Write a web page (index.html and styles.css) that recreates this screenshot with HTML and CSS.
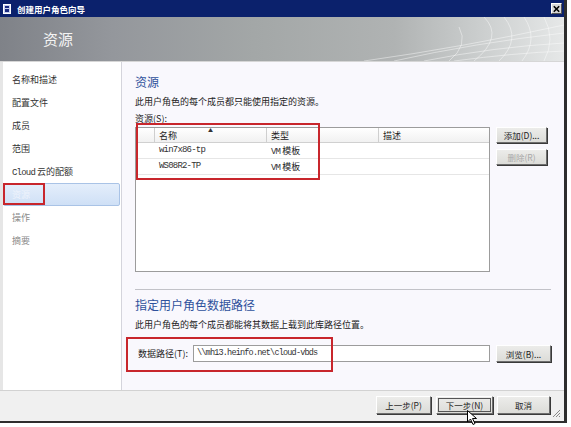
FILE: index.html
```html
<!DOCTYPE html>
<html lang="zh">
<head>
<meta charset="utf-8">
<link rel="stylesheet" href="styles.css">
</head>
<body>
<div class="window">
  <div class="titlebar">
    <svg class="ticon" width="8" height="10" viewBox="0 0 8 10"><rect x="0.5" y="0.5" width="7" height="9" fill="#c8d0f0" stroke="#fff"/><rect x="2" y="2" width="4" height="2" fill="#1a2a80"/><rect x="2" y="5" width="4" height="3" fill="#1a2a80"/></svg>
    <span class="ttext">创建用户角色向导</span>
    <span class="close"><svg width="10" height="10" viewBox="0 0 10 10"><path d="M2 2 L8 8 M8 2 L2 8" stroke="#000" stroke-width="1.8"/></svg></span>
  </div>
  <div class="banner">
    <span class="btitle">资源</span>
    <svg class="grid" width="200" height="44" viewBox="0 0 200 44">
      <g fill="none" stroke="#ffffff" stroke-opacity="0.55" stroke-width="0.8">
        <path d="M0 44 Q100 30 200 8"/>
        <path d="M30 44 Q110 26 200 16"/>
        <path d="M60 44 Q130 30 200 26"/>
        <path d="M90 44 Q150 36 200 34"/>
        <path d="M120 0 Q140 20 110 44"/>
        <path d="M140 0 Q158 22 135 44"/>
        <path d="M160 0 Q175 22 158 44"/>
        <path d="M180 0 Q192 22 180 44"/>
        <path d="M95 10 Q105 28 85 44"/>
      </g>
    </svg>
  </div>
  <div class="main">
    <nav class="nav">
      <div class="item">名称和描述</div>
      <div class="item">配置文件</div>
      <div class="item">成员</div>
      <div class="item">范围</div>
      <div class="item"><span class="mono">Cloud</span>&nbsp;云的配额</div>
      <div class="item selected">资源</div>
      <div class="item dim">操作</div>
      <div class="item dim">摘要</div>
    </nav>
    <section class="content">
      <h1 class="heading">资源</h1>
      <p class="desc">此用户角色的每个成员都只能使用指定的资源。</p>
      <p class="label">资源(S):</p>
      <div class="tablerow">
        <div class="table">
          <div class="thead">
            <div class="c0"></div>
            <div class="c1">名称<span class="sort">▲</span></div>
            <div class="c2">类型</div>
            <div class="c3">描述</div>
          </div>
          <div class="tr">
            <div class="c0"></div>
            <div class="c1 mono">win7x86-tp</div>
            <div class="c2"><span class="mono">VM</span>&nbsp;模板</div>
            <div class="c3"></div>
          </div>
          <div class="tr">
            <div class="c0"></div>
            <div class="c1 mono">WS08R2-TP</div>
            <div class="c2"><span class="mono">VM</span>&nbsp;模板</div>
            <div class="c3"></div>
          </div>
        </div>
        <div class="sidebtns">
          <button class="btn side">添加(D)...</button>
          <button class="btn side disabled">删除(R)</button>
        </div>
      </div>
      <hr class="sep">
      <h1 class="heading">指定用户角色数据路径</h1>
      <p class="desc">此用户角色的每个成员都能将其数据上载到此库路径位置。</p>
      <div class="pathrow">
        <span class="plabel">数据路径(T):</span>
        <div class="input mono">\\mh13.heinfo.net\cloud-vbds</div>
        <button class="btn browse">浏览(B)...</button>
      </div>
    </section>
  </div>
  <div class="footer">
    <button class="btn fb prev">上一步(P)</button>
    <button class="btn fb next">下一步(N)</button>
    <button class="btn fb cancel">取消</button>
    <svg class="grip" width="9" height="9" viewBox="0 0 9 9"><path d="M8 1 L1 8 M8 4 L4 8 M8 7 L7 8" stroke="#888" stroke-width="1"/></svg>
  </div>
  <div class="mark mark-nav"></div>
  <div class="mark mark-table"></div>
  <div class="mark mark-path"></div>
  <svg class="cursor" width="12" height="16" viewBox="0 0 12 16"><path d="M0.5 0.5 L0.5 12 L3.5 9 L6 14.5 L8 13.5 L5.5 8.5 L9.5 8.5 Z" fill="#fff" stroke="#000" stroke-width="1"/></svg>
</div>
</body>
</html>
```
FILE: styles.css
```css
* { box-sizing: border-box; }
html, body { margin: 0; padding: 0; background: #ffffff; }
body {
  width: 571px;
  height: 427px;
  overflow: hidden;
  font-family: "Noto Sans CJK SC", sans-serif;
  font-size: 9px;
  color: #222;
}
.mono {
  font-family: "Liberation Mono", "Noto Sans CJK SC", monospace;
  letter-spacing: -0.8px;
  color: #333;
}
.window {
  position: relative;
  width: 567px;
  height: 423px;
  border-right: 3px solid #2e2e2e;
  border-bottom: 2px solid #2e2e2e;
  background: #e6e6e6;
  display: flex;
  flex-direction: column;
}
.titlebar {
  height: 17px;
  background: #0b216c;
  display: flex;
  align-items: center;
  padding: 0 3px;
  color: #fff;
}
.ticon { flex: none; }
.ttext {
  margin-left: 6px;
  font-weight: bold;
  font-size: 8.5px;
  line-height: 12px;
  flex: 1;
}
.close {
  width: 11px;
  height: 11px;
  background: #d8d8d8;
  border: 1px solid #fff;
  border-right-color: #555;
  border-bottom-color: #555;
  display: flex;
  align-items: center;
  justify-content: center;
  margin-right: -1px;
}
.banner {
  position: relative;
  height: 44px;
  background: linear-gradient(90deg, #7f8288 0%, #94979c 20%, #a3a7a7 45%, #b0b3b3 70%, #c9cccc 84%, #e6e8e8 100%);
  display: flex;
  align-items: center;
  padding-left: 43px;
  overflow: hidden;
}
.btitle {
  font-size: 15px;
  color: #f4f4f4;
  line-height: 20px;
}
.grid { position: absolute; right: 0; top: 0; }
.main {
  flex: 1;
  display: flex;
  padding-left: 3px;
  border-top: 1px solid #d6d6d6;
}
.nav {
  width: 120px;
  background: #ffffff;
  border-right: 1px solid #d4d4dc;
  padding-top: 6px;
}
.item {
  height: 23px;
  line-height: 23px;
  padding-left: 9px;
  color: #333;
  font-size: 9px;
}
.item.selected {
  background: linear-gradient(180deg, #e4eefb 0%, #cfe0f6 100%);
  border: 1px solid #a9c3e6;
  border-radius: 2px;
  margin-right: 1px;
  line-height: 21px;
  padding-left: 8px;
  color: #eef3fc;
}
.item.dim { color: #8a8a8a; }
.content {
  flex: 1;
  background: #f9f8fd;
  padding: 11px 13px 0 13px;
}
.heading {
  margin: 0;
  font-size: 12px;
  line-height: 18px;
  font-weight: normal;
  color: #2f519c;
}
.desc, .label {
  margin: 4px 0 0 0;
  font-size: 9px;
  line-height: 14px;
  color: #222;
}
.label { margin-top: 3px; }
.tablerow {
  display: flex;
  gap: 6px;
  margin-top: 1px;
}
.table {
  width: 355px;
  height: 145px;
  background: #fff;
  border: 1px solid #9c9c9c;
}
.thead, .tr {
  display: flex;
  line-height: 15px;
  height: 16px;
}
.thead {
  height: 15px;
  background: linear-gradient(180deg, #ffffff 0%, #f1f1f1 100%);
  border-bottom: 1px solid #d0d0d0;
}
.tr { border-bottom: 1px solid #e6e6e6; }
.c0 { width: 19px; }
.c1 { width: 112px; padding-left: 4px; position: relative; }
.c2 { width: 112px; padding-left: 4px; }
.c3 { flex: 1; padding-left: 4px; }
.thead > div { border-right: 1px solid #cfcfcf; }
.thead > .c3 { border-right: none; }
.sort {
  position: absolute;
  left: 53px;
  top: -6px;
  font-size: 5px;
  color: #333;
}
.sidebtns {
  display: flex;
  flex-direction: column;
  gap: 6px;
}
.btn {
  font-family: "Noto Sans CJK SC", sans-serif;
  font-size: 8.5px;
  color: #222;
  background: linear-gradient(180deg, #ececea 0%, #dcdcd8 100%);
  border: 1px solid;
  border-color: #ffffff #6e6e6e #6e6e6e #ffffff;
  box-shadow: 1px 1px 0 #3a3a3a;
  padding: 0;
  margin: 0;
  line-height: 14px;
}
.btn.side { width: 51px; height: 16px; }
.btn.disabled { color: #a8a8a8; }
.sep {
  margin: 17px 0 6px 0;
  border: none;
  border-top: 1px solid #c2c2c8;
  height: 0;
}
.pathrow {
  display: flex;
  align-items: center;
  margin-top: 13px;
  height: 17px;
}
.plabel {
  width: 58px;
  padding-left: 3px;
  font-size: 9px;
}
.input {
  width: 297px;
  height: 17px;
  background: #fff;
  border: 1px solid #9c9c9c;
  padding-left: 3px;
  line-height: 15px;
  font-size: 8.5px;
}
.btn.browse { width: 55px; height: 17px; margin-left: 6px; }
.footer {
  position: relative;
  height: 31px;
  background: #f0f0f0;
  border-top: 1px solid #d2d2d2;
  display: flex;
  justify-content: flex-end;
  align-items: flex-start;
  padding: 5px 14px 0 0;
}
.btn.fb { height: 18px; }
.btn.prev { width: 55px; }
.btn.next { width: 57px; margin-left: 5px; outline: 1px solid #555; outline-offset: -3px; }
.btn.cancel { width: 53px; margin-left: 4px; }
.grip { position: absolute; right: 3px; bottom: 3px; }
.mark {
  position: absolute;
  border: 2px solid #c8262c;
}
.mark-nav { left: 3px; top: 183px; width: 42px; height: 22px; }
.mark-table { left: 136px; top: 123px; width: 184px; height: 57px; }
.mark-path { left: 126px; top: 337px; width: 207px; height: 35px; }
.cursor { position: absolute; left: 467px; top: 410px; }
```
